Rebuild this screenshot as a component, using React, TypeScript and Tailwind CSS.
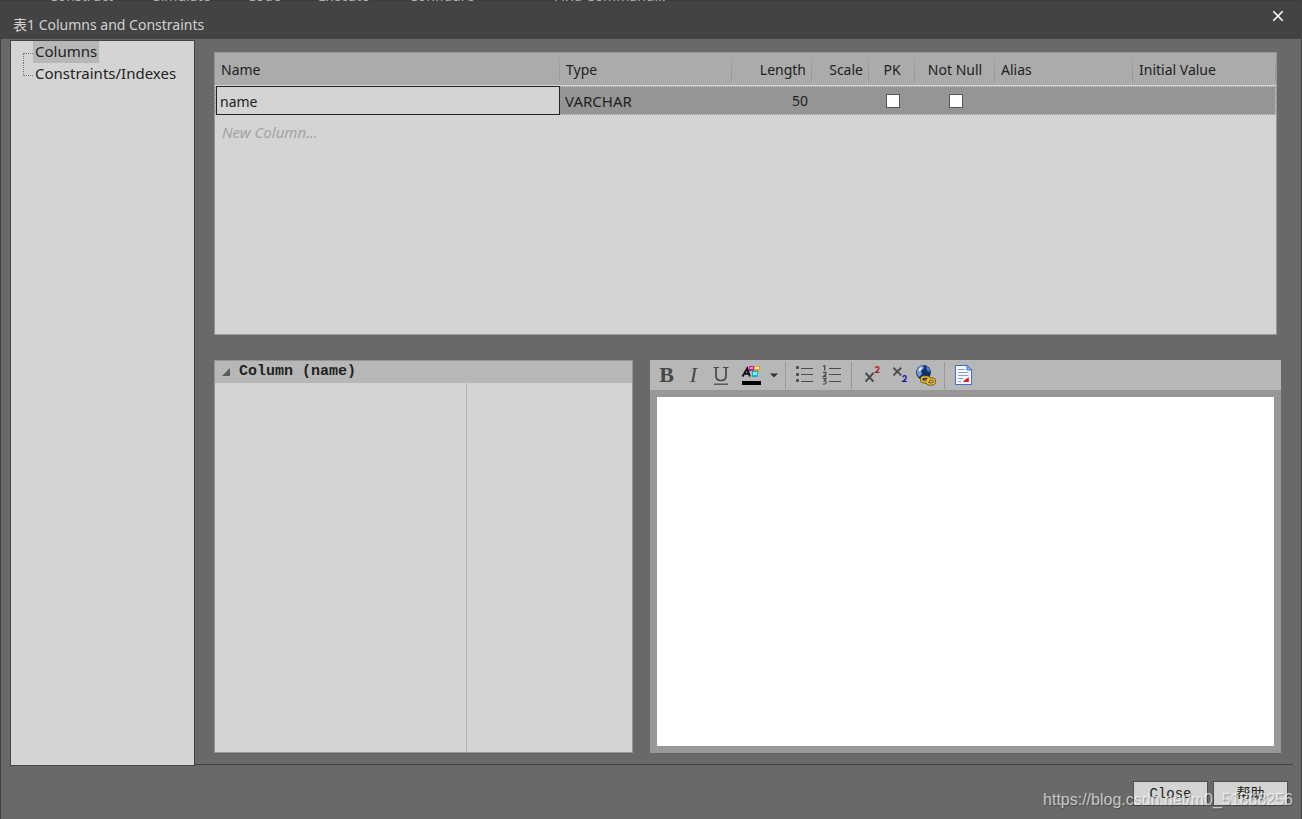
import React, { useState } from "react";

const headerCell =
  "border-b border-[#d4d4d4] pt-[2px] pb-0 font-normal bg-linear-to-b from-[#ababab] to-[#949494] bg-[length:1px_28px] bg-[position:right_top] bg-no-repeat";

const ribbonTabs = [
  { name: "Construct", box: "ml-[48px] w-[104px]" },
  { name: "Simulate", box: "w-[94px]" },
  { name: "Code", box: "w-[71px]" },
  { name: "Execute", box: "w-[91px]" },
  { name: "Configure", box: "w-[145px]" },
  { name: "Find Command...", box: "w-[140px]" },
];

function TitleBar() {
  return (
    <header className="flex h-[39px] shrink-0 flex-col bg-[#434343]">
      <div
        aria-hidden="true"
        className="flex h-px shrink-0 items-end overflow-hidden bg-[#3c3c3c] text-[14px] leading-[10px] text-[#b0b0b0]"
      >
        {ribbonTabs.map((t) => (
          <span key={t.name} className={`shrink-0 whitespace-nowrap ${t.box}`}>
            {t.name}
          </span>
        ))}
      </div>
      <div className="flex flex-1 items-start justify-between pl-[12px] pr-[13px]">
        <h1 className="pt-[14px] text-[14px] leading-[20px] text-[#d2d2d2]">表1 Columns and Constraints</h1>
        <button type="button" aria-label="Close window" className="flex h-[29px] w-5 items-center justify-center">
          <svg width="12" height="12" viewBox="0 0 12 12" fill="none" stroke="#fff" strokeWidth="1.6">
            <path d="M1.3 1.3 L10.7 10.7 M10.7 1.3 L1.3 10.7" />
          </svg>
        </button>
      </div>
    </header>
  );
}

function SideTree({ current, onSelect }: { current: string; onSelect: (v: string) => void }) {
  const items = ["Columns", "Constraints/Indexes"];
  return (
    <nav className="w-[185px] shrink-0 border border-[#434343] bg-[#d4d4d4] text-[15px] text-[#222]">
      <ul className="pl-3">
        {items.map((item, i) => (
          <li key={item} className="flex h-[22px]">
            <span
              aria-hidden="true"
              className={
                i === 0
                  ? "mt-[12px] w-[10px] border-l border-t border-dotted border-[#777]"
                  : "mb-[9px] w-[10px] border-b border-l border-dotted border-[#777]"
              }
            />
            <button
              type="button"
              onClick={() => onSelect(item)}
              className={`flex h-[22px] items-start px-[2px] text-left leading-[20px] ${
                current === item ? "bg-[#b7b7b7]" : ""
              }`}
            >
              {item}
            </button>
          </li>
        ))}
      </ul>
    </nav>
  );
}

const box =
  "block size-[14px] appearance-none border border-[#555] bg-white checked:bg-[#555] checked:shadow-[inset_0_0_0_2px_#fff]";

function ColumnTable() {
  return (
    <section className="mr-1 h-[283px] shrink-0 border border-[#979797] bg-[#d4d4d4]">
      <table className="w-full table-fixed border-separate border-spacing-0 text-[14px] leading-[20px] text-[#222]">
        <colgroup>
          <col className="w-[345px]" />
          <col className="w-[172px]" />
          <col className="w-[80px]" />
          <col className="w-[57px]" />
          <col className="w-[46px]" />
          <col className="w-[80px]" />
          <col className="w-[138px]" />
          <col />
        </colgroup>
        <thead>
          <tr className="h-[33px] bg-[#ababab] text-left">
            <th className={`px-[6px] ${headerCell}`}>Name</th>
            <th className={`px-[6px] ${headerCell}`}>Type</th>
            <th className={`px-[6px] text-right ${headerCell}`}>Length</th>
            <th className={`px-[6px] text-right ${headerCell}`}>Scale</th>
            <th className={`px-0 text-center ${headerCell}`}>PK</th>
            <th className={`px-0 text-center ${headerCell}`}>Not Null</th>
            <th className={`px-[6px] ${headerCell}`}>Alias</th>
            <th className={`px-[6px] ${headerCell}`}>Initial Value</th>
          </tr>
        </thead>
        <tbody>
          <tr className="h-[29px] bg-[#959595] outline-1 -outline-offset-1 outline-dotted outline-[#d0d0d0]">
            <td className="p-0 pl-px">
              <input
                aria-label="Column name"
                defaultValue="name"
                className="relative block h-[29px] w-full border border-[#222] bg-[#d4d4d4] px-[3px] pt-[2px] outline-none"
              />
            </td>
            <td className="px-[5px] py-0 text-[15px]">VARCHAR</td>
            <td className="px-[4px] pb-0 pt-px text-right">50</td>
            <td />
            <td className="py-0 pl-[17px]">
              <input type="checkbox" aria-label="PK" className={box} />
            </td>
            <td className="py-0 pl-[34px]">
              <input type="checkbox" aria-label="Not Null" className={box} />
            </td>
            <td />
            <td />
          </tr>
          <tr className="h-[33px]">
            <td colSpan={8} className="px-[7px] pb-0 pt-px text-[15px] italic text-[#a3a3a3]">
              New Column...
            </td>
          </tr>
        </tbody>
      </table>
    </section>
  );
}

function PropertyPanel() {
  return (
    <section className="flex min-w-0 flex-col border border-[#979797] bg-[#d4d4d4]">
      <button
        type="button"
        className="flex h-[22px] shrink-0 items-center gap-[9px] bg-[#b7b7b7] pl-[7px] font-['Liberation_Mono','Noto_Sans_CJK_SC',monospace] text-[15px] font-bold leading-[20px] text-[#222]"
      >
        <svg width="8" height="8" viewBox="0 0 8 8">
          <path d="M8 0 V8 H0 Z" fill="#5a5a5a" />
        </svg>
        Column (name)
      </button>
      <div className="flex flex-1">
        <div className="w-[252px] border-r border-[#b7b7b7]" />
        <div className="flex-1" />
      </div>
    </section>
  );
}

function Tool({ label, width = "w-[27px]", children }: { label: string; width?: string; children: React.ReactNode }) {
  return (
    <button type="button" aria-label={label} className={`flex h-[30px] shrink-0 items-center justify-center ${width}`}>
      {children}
    </button>
  );
}

function Divider() {
  return <span className="ml-[6px] mr-[5px] h-[27px] w-px shrink-0 bg-[#979797]" />;
}

const letter = "font-['Liberation_Serif',serif] text-[22px] leading-[24px] text-[#484848]";

function Toolbar() {
  return (
    <div className="flex h-[30px] shrink-0 items-center bg-[#b7b7b7] pl-[3px]">
      <Tool label="Bold">
        <span className={`font-bold ${letter}`}>B</span>
      </Tool>
      <Tool label="Italic">
        <span className={`italic ${letter}`}>I</span>
      </Tool>
      <Tool label="Underline">
        <svg width="27" height="30" viewBox="0 0 27 30" fill="none" stroke="#484848">
          <path d="M6.5 7.5 H12 M16 7.5 H21.5" />
          <path d="M9 7.5 V16 Q9 20.5 14 20.5 Q19 20.5 19 16 V7.5" strokeWidth="1.7" />
          <path d="M7 24.2 H21" strokeWidth="1.3" />
        </svg>
      </Tool>
      <Tool label="Text colour" width="w-[34px]">
        <svg width="34" height="30" viewBox="0 0 34 30">
          <path d="M8.5 16.5 L13.2 8.5 L15.8 16.5 M10.5 13.8 H15" fill="none" stroke="#111" strokeWidth="2" />
          <rect x="15" y="6" width="5" height="5" fill="#b8249c" />
          <rect x="16" y="7" width="3" height="2" fill="#f08ad8" />
          <rect x="20" y="6" width="6" height="5" fill="#d0a828" />
          <rect x="21" y="7" width="4" height="2" fill="#fbe98a" />
          <rect x="18" y="11" width="6" height="6" fill="#10b0cc" />
          <rect x="19" y="12" width="4" height="3" fill="#8aeef8" />
          <rect x="8" y="21" width="19" height="4" fill="#000" />
        </svg>
      </Tool>
      <Tool label="More colours" width="w-[11px]">
        <svg width="8" height="5" viewBox="0 0 8 5">
          <path d="M0 0.5 H8 L4 4.5 Z" fill="#333" />
        </svg>
      </Tool>
      <Divider />
      <Tool label="Bulleted list">
        <svg width="27" height="30" viewBox="0 0 27 30" fill="#4c4c4c">
          <rect x="5" y="6" width="3" height="3" rx="1" />
          <rect x="5" y="13" width="3" height="3" rx="1" />
          <rect x="5" y="19" width="3" height="3" rx="1" />
          <rect x="10" y="8" width="12" height="1" />
          <rect x="10" y="14" width="12" height="1" />
          <rect x="10" y="21" width="12" height="1" />
        </svg>
      </Tool>
      <Tool label="Numbered list">
        <svg width="27" height="30" viewBox="0 0 27 30" fill="none" stroke="#4c4c4c">
          <path d="M5 6.5 L6.7 5.7 V10.5" strokeWidth="1.3" />
          <path d="M5 12.5 H7.8 V14.6 L5.4 16.5 H8.4" strokeWidth="1.3" />
          <path d="M5 18.7 H8 L6.4 20.9 Q8.5 21 8 23 Q7 24.6 5 24" strokeWidth="1.3" />
          <path d="M11 8.5 H23 M11 14.5 H23 M11 21.5 H23" />
        </svg>
      </Tool>
      <Divider />
      <Tool label="Superscript">
        <svg width="27" height="30" viewBox="0 0 27 30" fill="none">
          <path d="M8.6 13 L16.4 21.6 M16.4 13 L8.6 21.6" stroke="#4c4c4c" strokeWidth="2" />
          <path d="M18.5 8.2 Q18.6 6.6 20.4 6.6 Q22 6.8 21.8 8.6 Q21.5 10 18.6 12.4 H22.4" stroke="#ab1c1c" strokeWidth="1.4" />
        </svg>
      </Tool>
      <Tool label="Subscript">
        <svg width="27" height="30" viewBox="0 0 27 30" fill="none">
          <path d="M9.4 7.8 L17.2 15.4 M17.2 7.8 L9.4 15.4" stroke="#4c4c4c" strokeWidth="1.9" />
          <path d="M18.9 17.2 Q19 15.6 20.8 15.6 Q22.4 15.8 22.2 17.6 Q21.9 19 19 21.4 H22.8" stroke="#1a1aa0" strokeWidth="1.4" />
        </svg>
      </Tool>
      <Tool label="Insert link">
        <svg width="27" height="30" viewBox="0 0 27 30">
          <circle cx="12.5" cy="12.5" r="7.4" fill="#13306e" />
          <path d="M6 10 Q8 5.5 12 5.3 L13 8 L10 11 L11 14 L8 17 Q5 13 6 10 Z" fill="#6fa3d8" />
          <path d="M7.5 9.5 L10 7 L11 8.5 L8.5 11.5 Z" fill="#e4f2fb" />
          <path d="M15 6 L18.6 8.8 L19 12 L16 10.5 Z" fill="#4b86c8" />
          <g fill="none">
            <rect x="10.5" y="17" width="7.5" height="5" rx="2.4" stroke="#5f4300" strokeWidth="2.8" />
            <rect x="16" y="19" width="7.5" height="5" rx="2.4" stroke="#5f4300" strokeWidth="2.8" />
            <rect x="10.5" y="17" width="7.5" height="5" rx="2.4" stroke="#e9bd2c" strokeWidth="1.5" />
            <rect x="16" y="19" width="7.5" height="5" rx="2.4" stroke="#e9bd2c" strokeWidth="1.5" />
          </g>
        </svg>
      </Tool>
      <Divider />
      <Tool label="Document">
        <svg width="27" height="30" viewBox="0 0 27 30">
          <path d="M5.5 5.5 H17 L21.5 10 V24.5 H5.5 Z" fill="#f4f8ff" stroke="#3f6cc4" />
          <path d="M17 5.5 V10 H21.5 Z" fill="#a9c4f2" stroke="#3f6cc4" />
          <path d="M8 9.5 H15 M8 12.5 H18.5 M8 15.5 H18.5 M8 18.5 H13 M8 21.5 H11" stroke="#8d9fc6" />
          <path d="M18.8 17 V22 H12.8 L15 20 Z" fill="#e2161c" />
        </svg>
      </Tool>
    </div>
  );
}

function NotesEditor() {
  return (
    <section className="flex min-w-0 flex-col bg-[#979797]">
      <Toolbar />
      <div className="flex flex-1 p-[7px]">
        <textarea aria-label="Notes" className="flex-1 resize-none bg-white p-2 text-[14px] text-[#222] outline-none" />
      </div>
    </section>
  );
}

const footerButton =
  "flex h-[25px] w-[75px] items-center justify-center border border-[#505050] bg-[#d4d4d4] pt-px text-[14px] leading-[20px] text-[#222] font-['Liberation_Mono','Noto_Sans_CJK_SC',monospace]";

export default function App() {
  const [page, setPage] = useState("Columns");
  return (
    <div className="relative flex min-h-screen flex-col border-x border-[#434343] bg-[#696969] font-['Noto_Sans','Noto_Sans_CJK_SC',sans-serif]">
      <TitleBar />
      <main className="flex flex-1 pl-[9px] pt-px">
        <SideTree current={page} onSelect={setPage} />
        <div className="mb-px mr-2 flex min-w-0 flex-1 flex-col gap-[25px] border-b border-[#434343] pb-[11px] pl-[19px] pr-[12px] pt-[12px]">
          <ColumnTable />
          <div className="grid flex-1 grid-cols-[419fr_631fr] gap-[17px]">
            <PropertyPanel />
            <NotesEditor />
          </div>
        </div>
      </main>
      <footer className="flex h-[53px] shrink-0 justify-end gap-[5px] pr-[13px] pt-[15px]">
        <button type="button" className={footerButton}>
          Close
        </button>
        <button type="button" className={footerButton}>
          帮助
        </button>
      </footer>
      <p className="pointer-events-none absolute bottom-[8px] right-[8px] font-['Liberation_Sans',sans-serif] text-[16px] leading-[22px] text-white/65 [text-shadow:1px_1px_1px_rgba(0,0,0,0.3)]">
        https://blog.csdn.net/m0_51868256
      </p>
    </div>
  );
}
